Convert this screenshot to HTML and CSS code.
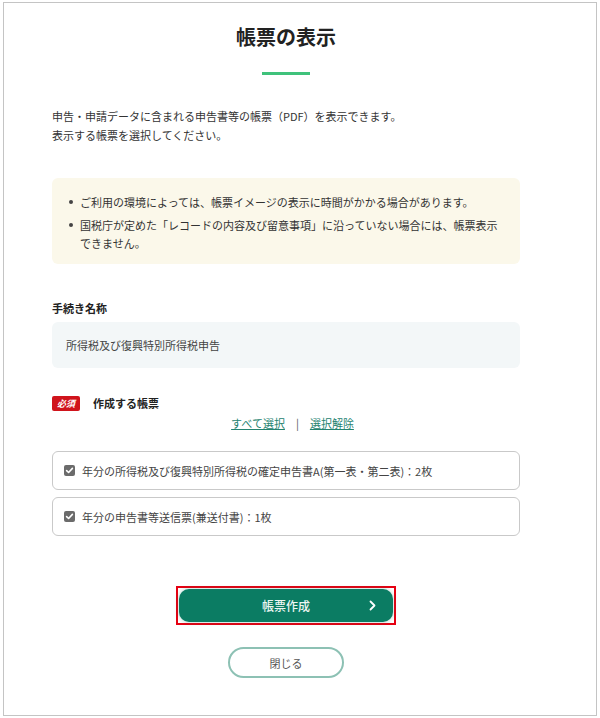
FILE: index.html
```html
<!DOCTYPE html>
<html lang="ja">
<head>
  <meta charset="utf-8">
  <title>帳票の表示</title>
  <meta name="viewport" content="width=device-width, initial-scale=1">
  <link rel="stylesheet" href="styles.css">
</head>
<body>
  <div class="frame">
    <main class="page">
      <h1 class="title">帳票の表示</h1>
      <div class="title-rule"></div>

      <p class="lead">申告・申請データに含まれる申告書等の帳票（PDF）を表示できます。<br>表示する帳票を選択してください。</p>

      <ul class="notice">
        <li>ご利用の環境によっては、帳票イメージの表示に時間がかかる場合があります。</li>
        <li>国税庁が定めた「レコードの内容及び留意事項」に沿っていない場合には、帳票表示できません。</li>
      </ul>

      <h2 class="label">手続き名称</h2>
      <div class="readonly">所得税及び復興特別所得税申告</div>

      <div class="field-head">
        <span class="required">必須</span>
        <h2 class="label">作成する帳票</h2>
      </div>
      <div class="select-links">
        <a href="#">すべて選択</a><span class="sep">|</span><a href="#">選択解除</a>
      </div>

      <label class="check-card">
        <span class="check"><svg viewBox="0 0 11 11" width="11" height="11"><path d="M2.6 5.6 L4.6 7.5 L8.4 3.4" fill="none" stroke="#fff" stroke-width="1.6" stroke-linecap="round" stroke-linejoin="round"/></svg></span>
        年分の所得税及び復興特別所得税の確定申告書A(第一表・第二表)：2枚
      </label>
      <label class="check-card">
        <span class="check"><svg viewBox="0 0 11 11" width="11" height="11"><path d="M2.6 5.6 L4.6 7.5 L8.4 3.4" fill="none" stroke="#fff" stroke-width="1.6" stroke-linecap="round" stroke-linejoin="round"/></svg></span>
        年分の申告書等送信票(兼送付書)：1枚
      </label>

      <div class="actions">
        <div class="highlight">
          <button class="btn-primary">帳票作成
            <svg class="chevron" viewBox="0 0 7 11" width="7" height="11"><path d="M1.5 1.5 L5.5 5.5 L1.5 9.5" fill="none" stroke="#fff" stroke-width="1.8" stroke-linecap="round" stroke-linejoin="round"/></svg>
          </button>
        </div>
        <button class="btn-close">閉じる</button>
      </div>
    </main>
  </div>
</body>
</html>
```

FILE: styles.css
```css
* {
  margin: 0;
  padding: 0;
  box-sizing: border-box;
}

:root {
  --text: #333333;
  --green: #0b7c63;
  --accent: #3fc27b;
  --link: #24826f;
  --notice-bg: #fbf8ea;
  --readonly-bg: #f3f7f8;
  --line: #c9c9c9;
  --red: #d0141c;
}

body {
  font-family: "Noto Sans CJK JP", "Noto Sans", sans-serif;
  font-size: 11px;
  color: var(--text);
  background: #fff;
}

.frame {
  margin: 2px 3px 0;
  height: 714px;
  border: 1px solid #c4c4c4;
}

.page {
  width: 468px;
  margin-left: 48px;
  padding-top: 20px;
}

.title {
  font-size: 20px;
  line-height: 28px;
  font-weight: 700;
  text-align: center;
  color: #222;
}

.title-rule {
  width: 48px;
  height: 3px;
  margin: 21px auto 0;
  background: var(--accent);
}

.lead {
  margin-top: 32px;
  line-height: 19px;
}

.notice {
  list-style: none;
  margin-top: 33px;
  padding: 15px 14px 12px 28px;
  background: var(--notice-bg);
  border-radius: 6px;
  line-height: 18px;
}

.notice li {
  position: relative;
}

.notice li + li {
  margin-top: 5px;
}

.notice li::before {
  content: "";
  position: absolute;
  left: -11px;
  top: 7px;
  width: 4px;
  height: 4px;
  border-radius: 50%;
  background: #444;
}

.label {
  font-size: 11px;
  line-height: 16px;
  font-weight: 700;
  color: #222;
}

.page > .label {
  margin-top: 36px;
}

.readonly {
  margin-top: 6px;
  padding: 14px;
  line-height: 18px;
  background: var(--readonly-bg);
  border-radius: 6px;
  color: #444;
}

.field-head {
  display: flex;
  align-items: center;
  gap: 13px;
  margin-top: 27px;
}

.required {
  display: inline-block;
  width: 28px;
  height: 15px;
  line-height: 15px;
  text-align: center;
  font-size: 9px;
  font-weight: 700;
  font-style: italic;
  color: #fff;
  background: var(--red);
  border-radius: 2px;
}

.select-links {
  margin-top: 4px;
  padding-left: 13px;
  text-align: center;
  line-height: 16px;
}

.select-links a {
  color: var(--link);
}

.sep {
  margin: 0 11px;
  color: #555;
}

.check-card {
  display: flex;
  align-items: center;
  gap: 7px;
  height: 39px;
  margin-top: 20px;
  padding-left: 11px;
  border: 1px solid var(--line);
  border-radius: 6px;
  color: #444;
}

.check-card + .check-card {
  margin-top: 7px;
}

.check {
  display: inline-flex;
  width: 11px;
  height: 11px;
  background: #6b6b6b;
  border-radius: 2px;
}

.actions {
  display: flex;
  flex-direction: column;
  align-items: center;
  margin-top: 50px;
}

.highlight {
  border: 2px solid #e60012;
  padding: 1px;
}

.btn-primary {
  position: relative;
  display: block;
  width: 214px;
  height: 33px;
  border: none;
  border-radius: 10px;
  background: var(--green);
  color: #eef6f3;
  font: inherit;
  font-size: 12px;
  font-weight: 500;
  box-shadow: 0 0 4px rgba(11, 124, 99, 0.35);
}

.chevron {
  position: absolute;
  right: 17px;
  top: 11px;
}

.btn-close {
  width: 116px;
  height: 31px;
  margin-top: 22px;
  border: 2px solid #8dc1b4;
  border-radius: 16px;
  background: #fff;
  color: #555;
  font: inherit;
  font-size: 11px;
}
```
